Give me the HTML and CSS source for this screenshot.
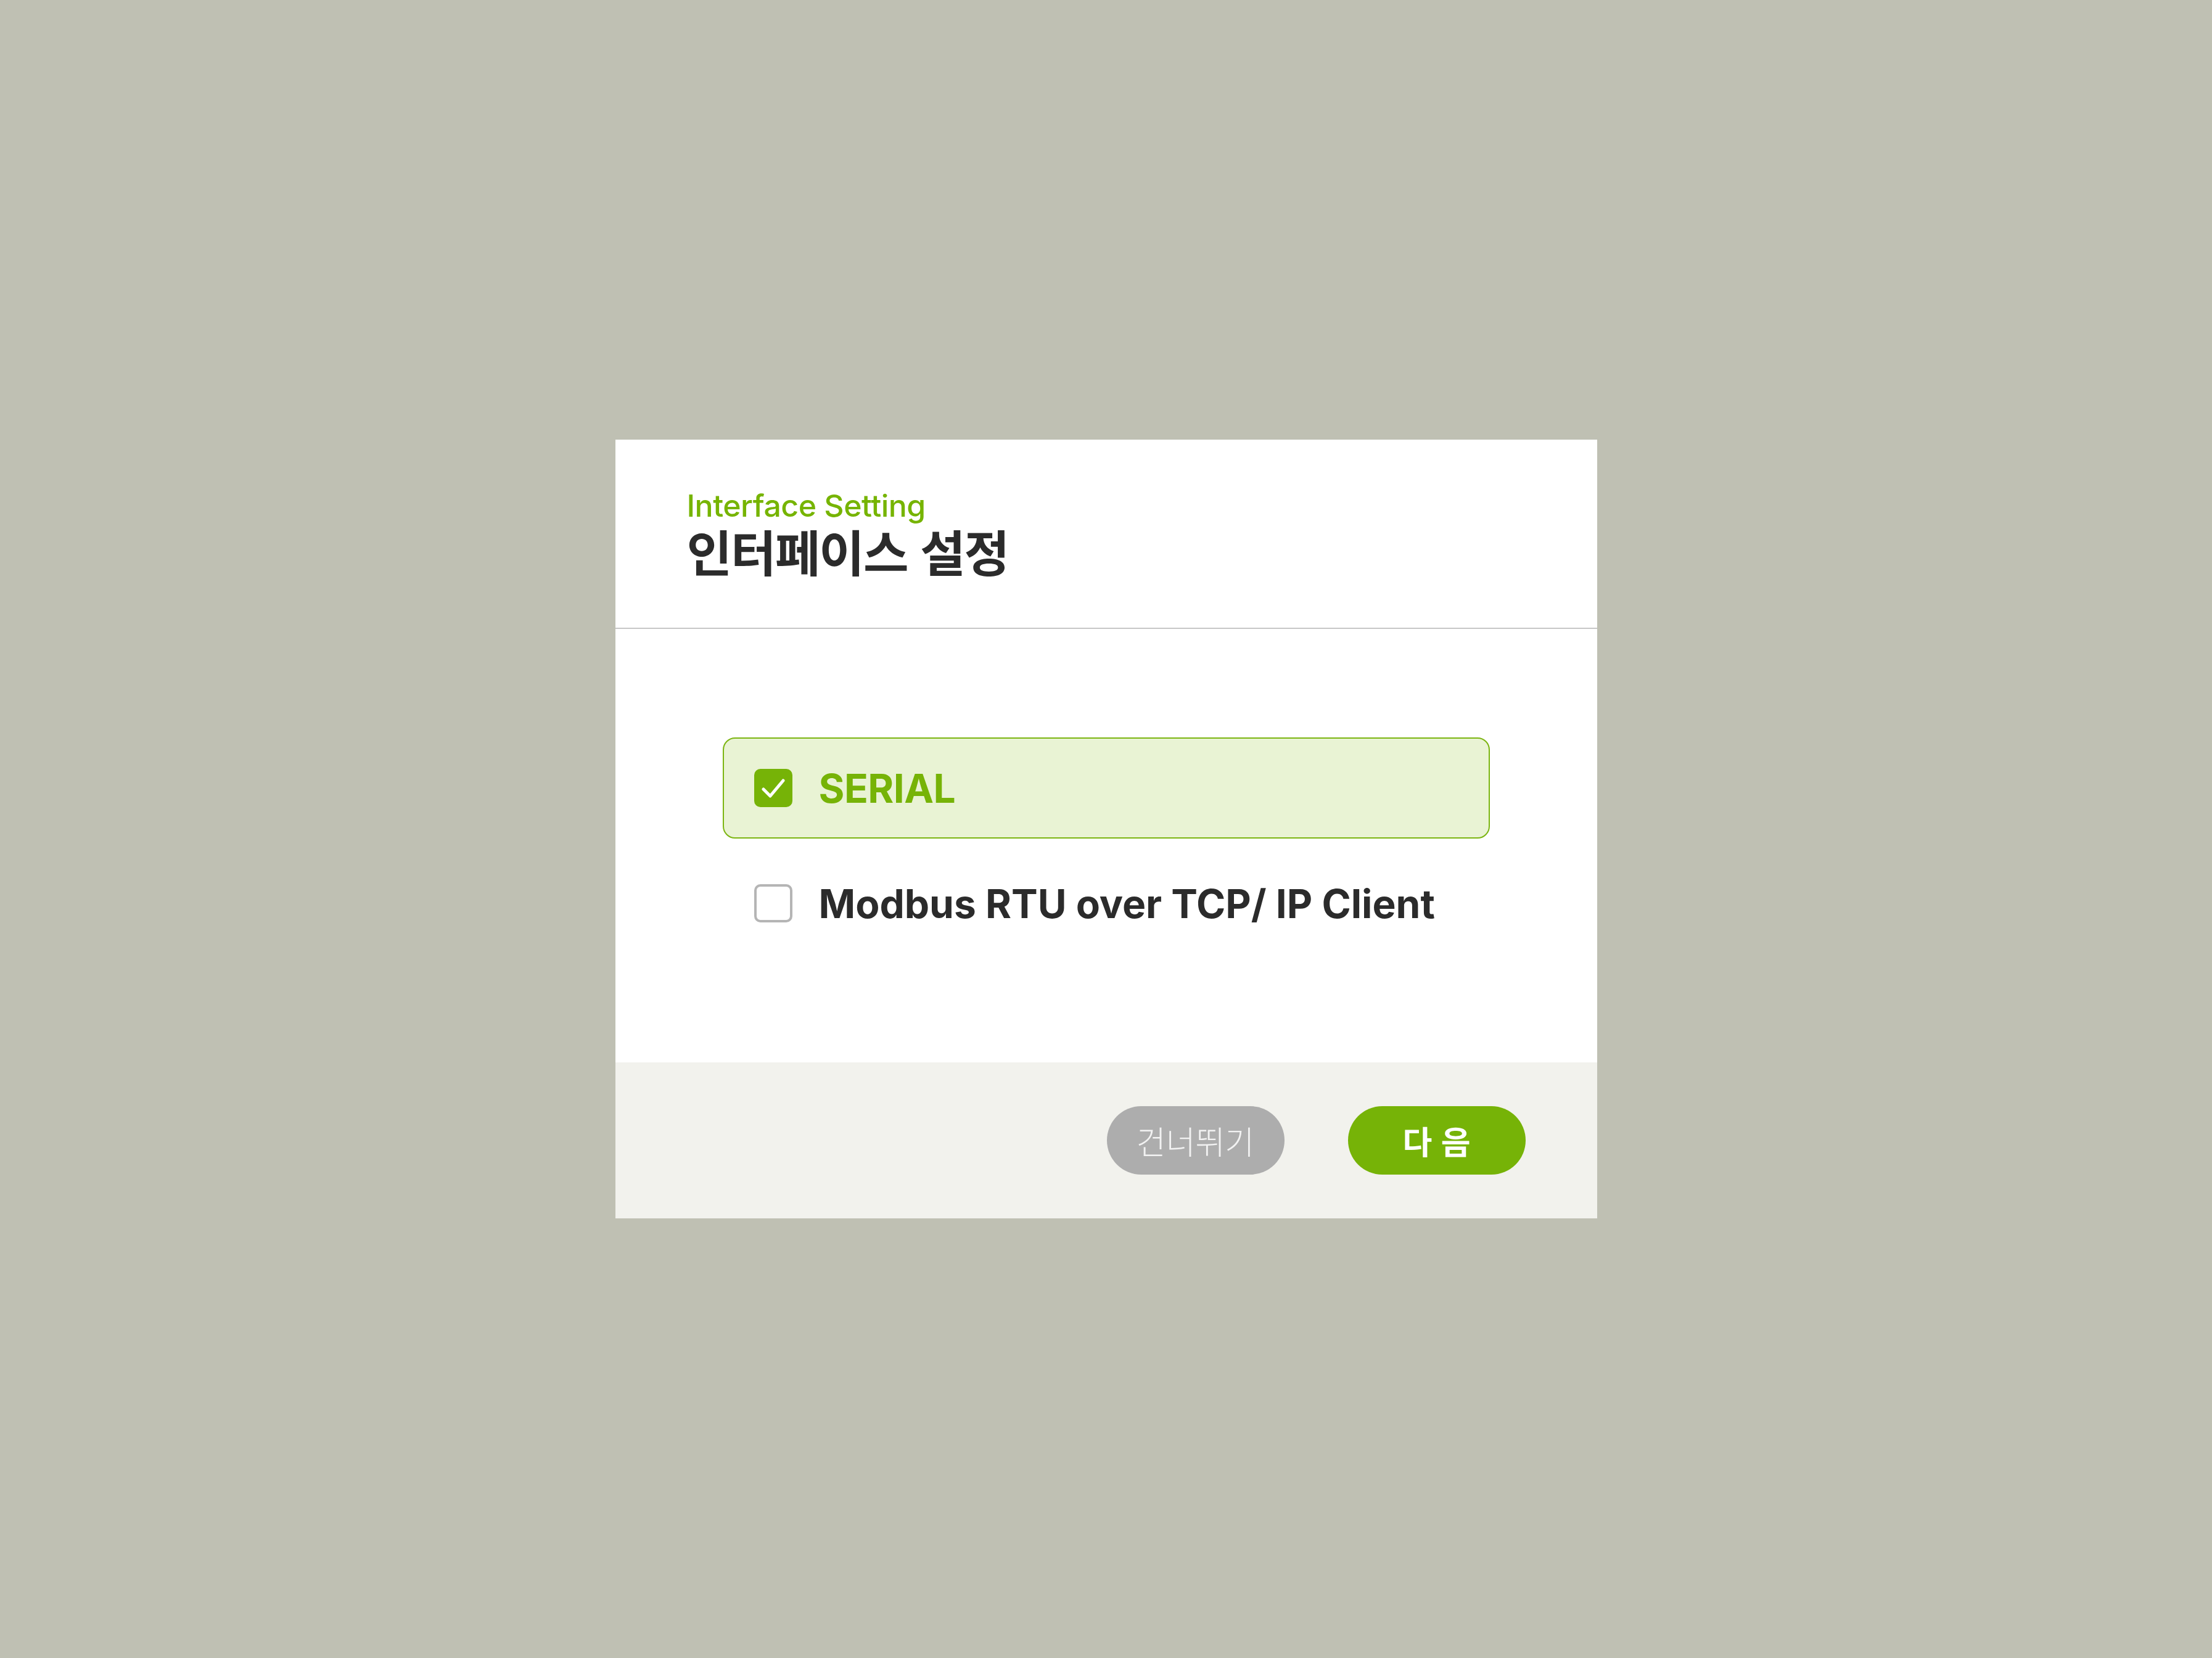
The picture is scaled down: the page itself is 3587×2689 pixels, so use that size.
FILE: index.html
```html
<!DOCTYPE html>
<html lang="ko">
<head>
<meta charset="utf-8">
<title>Interface Setting</title>
<link rel="stylesheet" href="styles.css">
</head>
<body>
<div class="dialog">
  <header class="dialog-header">
    <div class="subtitle">Interface Setting</div>
    <h1 class="title">인터페이스 설정</h1>
  </header>
  <main class="dialog-body">
    <div class="option selected">
      <span class="check checked">
        <svg viewBox="0 0 62 62" width="62" height="62"><path d="M15 33 L26 44 L47 19" fill="none" stroke="#fff" stroke-width="5" stroke-linecap="round" stroke-linejoin="round"/></svg>
      </span>
      <span class="label">SERIAL</span>
    </div>
    <div class="option">
      <span class="check"></span>
      <span class="label">Modbus RTU over TCP/ IP Client</span>
    </div>
  </main>
  <footer class="dialog-footer">
    <button class="btn btn-skip">건너뛰기</button>
    <button class="btn btn-next">다 음</button>
  </footer>
</div>
</body>
</html>
```
FILE: styles.css
```css
html, body {
  margin: 0;
  padding: 0;
}
body {
  background: #bfc0b3;
  width: 100vw;
  height: 100vh;
  display: flex;
  align-items: center;
  justify-content: center;
  font-family: Inter, "Noto Sans CJK KR", sans-serif;
}
.dialog {
  width: 1592px;
  height: 1263px;
  background: #ffffff;
  display: flex;
  flex-direction: column;
}
.dialog-header {
  box-sizing: border-box;
  height: 307px;
  flex: none;
  border-bottom: 2px solid #c6c6c6;
  padding: 81px 116px 0;
  display: flex;
  flex-direction: column;
}
.subtitle {
  font-family: Inter, sans-serif;
  font-weight: 500;
  font-size: 50px;
  line-height: 52px;
  color: #76b400;
  letter-spacing: -0.5px;
}
.title {
  margin: 0;
  font-family: "Noto Sans CJK KR", sans-serif;
  font-weight: 700;
  font-size: 80px;
  line-height: 92px;
  color: #2b2b2b;
  letter-spacing: -2px;
}
.dialog-body {
  flex: 1;
  padding: 176px 174px 0;
  display: flex;
  flex-direction: column;
  gap: 23px;
}
.option {
  height: 164px;
  box-sizing: border-box;
  border: 2px solid transparent;
  border-radius: 20px;
  padding: 0 49px;
  display: flex;
  align-items: center;
  gap: 43px;
}
.option.selected {
  background: #e9f3d4;
  border-color: #7cb512;
}
.check {
  width: 62px;
  height: 62px;
  box-sizing: border-box;
  border: 4px solid #b5b5b5;
  border-radius: 10px;
  background: #fff;
  flex: none;
  display: flex;
}
.check.checked {
  border: none;
  background: #76b307;
}
.label {
  font-family: Inter, sans-serif;
  font-weight: 700;
  font-size: 64px;
  color: #2b2b2b;
  letter-spacing: 0;
}
.selected .label {
  color: #76b307;
  letter-spacing: -0.5px;
}
.dialog-footer {
  height: 253px;
  flex: none;
  background: #f2f2ed;
  display: flex;
  align-items: center;
  justify-content: flex-end;
  padding-right: 116px;
  gap: 103px;
}
.btn {
  width: 288px;
  height: 111px;
  border: none;
  border-radius: 56px;
  font-family: "Noto Sans CJK KR", sans-serif;
  font-size: 52px;
  padding: 0;
  display: flex;
  align-items: center;
  justify-content: center;
}
.btn-skip {
  background: #adadad;
  color: #f2f2f2;
  font-weight: 300;
}
.btn-next {
  background: #76b307;
  color: #ffffff;
  font-weight: 700;
}
```
